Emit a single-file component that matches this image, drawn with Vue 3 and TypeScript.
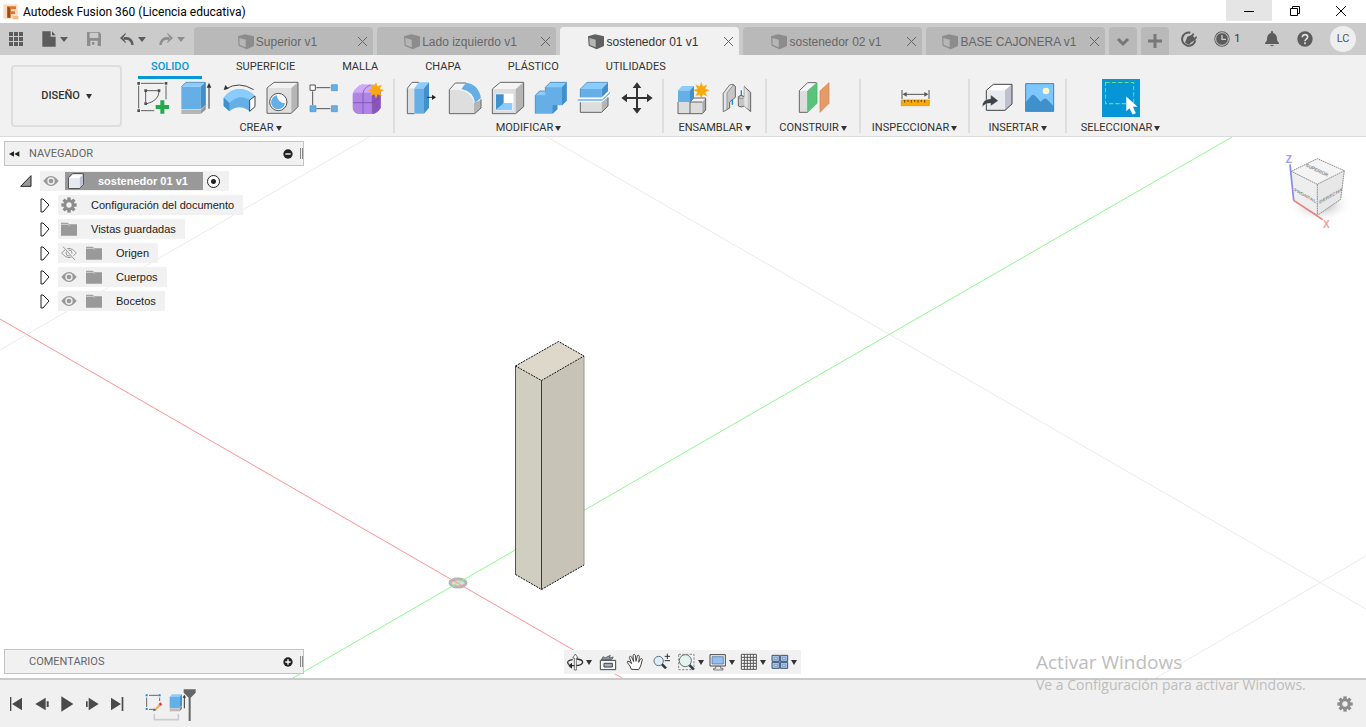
<script setup lang="ts">
import { ref } from 'vue'

interface Tool { name: string; icon: string }
interface Group { label: string; size: string; tools: Tool[] }
interface TreeNode { label: string; icon: 'gear' | 'folder'; eye?: 'on' | 'off' }
interface ViewTool { name: string; icon: string; menu: boolean }

const documents = ['Superior v1', 'Lado izquierdo v1', 'sostenedor 01 v1', 'sostenedor 02 v1', 'BASE CAJONERA v1']
const activeDocument = ref(2)

const workspaces = ['SOLIDO', 'SUPERFICIE', 'MALLA', 'CHAPA', 'PLÁSTICO', 'UTILIDADES']
const activeWorkspace = ref(0)

const star = (x: number, y: number, r: number): string => {
  const points: string[] = []
  for (let i = 0; i < 16; i++) {
    const radius = i % 2 ? r * 0.5 : r
    const a = (Math.PI * i) / 8
    points.push(`${(x + radius * Math.sin(a)).toFixed(1)},${(y - radius * Math.cos(a)).toFixed(1)}`)
  }
  return `<polygon points="${points.join(' ')}" fill="#fba80a"/>`
}

const groups: Group[] = [
  {
    label: 'CREAR', size: 'g-create', tools: [
      { name: 'Crear boceto', icon: `<path d="M18 10H86M11 17V85M18 92H58M93 17V58M36 32H70M32 36V67M72 36Q70 62 36 71" fill="none" stroke="#606060" stroke-width="3"/><path d="M7 6h8v8H7zM89 6h8v8h-8zM7 88h8v8H7zM28 28h8v8h-8zM68 28h8v8h-8zM28 67h8v8h-8z" fill="#505050"/><path d="M76 61h12v14h14v12H88v14H76V87H62V75h14z" fill="#22aa4c"/>` },
      { name: 'Extrusión', icon: `<path d="M10 90H68V102H10z" fill="#b5b5b5"/><path d="M68 90l15-14v13l-15 13z" fill="#969696"/><path d="M10 20H68V88H10z" fill="#66aee6"/><path d="M10 20L24 7H82L68 20z" fill="#8accff"/><path d="M68 20L82 7V76L68 88z" fill="#4090cc"/><path d="M10 20L24 7H82V76" fill="none" stroke="#39719d" stroke-width="2"/><path d="M93 86V18" stroke="#333" stroke-width="3"/><path d="M93 8l7 15H86z" fill="#333"/>` },
      { name: 'Barrido', icon: `<path d="M14 27Q54 2 98 29" fill="none" stroke="#444" stroke-width="3"/><path d="M8 30l5-15 10 11z" fill="#333"/><path d="M8 53Q28 28 54 27Q82 27 101 47V80L86 94Q55 70 25 94L8 78z" fill="#66aee6"/><path d="M8 53Q28 28 54 27Q82 27 101 47L86 60Q55 40 25 69z" fill="#8accff"/><path d="M8 53L25 69V94L8 78z" fill="#4090cc"/><path d="M86 60L102 48V80L86 94z" fill="#fff" stroke="#444" stroke-width="3"/>` },
      { name: 'Agujero', icon: `<path d="M9 24H82V100H9z" fill="#dfdfdf"/><path d="M9 24L30 7H102L82 24z" fill="#f2f2f2"/><path d="M82 24L102 7V80L82 100z" fill="#b5b5b5"/><path d="M9 24L30 7H102V80L82 100H9z" fill="none" stroke="#666" stroke-width="3"/><circle cx="43" cy="66" r="26" fill="#f8f8f8" stroke="#555" stroke-width="3"/><path d="M38 46A21 21 0 1 0 63 70A26 26 0 0 1 38 46z" fill="#66aee6"/>` },
      { name: 'Patrón', icon: `<path d="M28 23H70M17 34V75M28 86H70" stroke="#555" stroke-width="3"/><path d="M9 15h16v16H9z" fill="#fff" stroke="#555" stroke-width="3"/><path d="M73 14h18v18H73zM9 77h18v18H9zM73 77h18v18H73z" fill="#66aee6" stroke="#4a91c8" stroke-width="2"/>` },
      { name: 'Crear forma', icon: `<path d="M8 42Q12 28 24 20Q31 12 43 14H75Q92 24 92 38V84Q82 99 69 102H23Q8 98 8 82z" fill="#b083e6"/><path d="M8 42Q12 28 24 20Q31 12 43 14H75L67 38H24Q12 36 8 42z" fill="#cda9fa"/><path d="M67 38Q90 20 92 38V84Q82 99 69 102z" fill="#8955bd"/><path d="M9 68H68L91 50M39 39V102M67 40V100M39 39Q42 22 62 15" fill="none" stroke="#704a99" stroke-width="2"/>${star(78, 31, 25)}` },
    ],
  },
  {
    label: 'MODIFICAR', size: 'g-modify', tools: [
      { name: 'Pulsar/tirar', icon: `<path d="M13 25H34V101H13z" fill="#ddd"/><path d="M13 25L27 7H50L34 25z" fill="#f5f5f5"/><path d="M34 101H13V25L27 7H48" fill="none" stroke="#666" stroke-width="3"/><path d="M34 25H63V101H34z" fill="#66aee6"/><path d="M34 25L48 7H78L63 25z" fill="#8accff"/><path d="M63 25L78 7V83L63 101z" fill="#4090cc"/><path d="M72 52H92" stroke="#333" stroke-width="3"/><path d="M87 44l12 8-12 8z" fill="#222"/>` },
      { name: 'Empalme', icon: `<path d="M10 29L28 9H62Q99 20 105 62V84L86 101H10z" fill="#f4f4f4"/><path d="M10 29H36Q78 35 84 72V101H10z" fill="#dedede"/><path d="M84 68L105 60V84L86 101H84z" fill="#b5b5b5"/><path d="M10 29L28 9H60M105 58V84L86 101H10V29" fill="none" stroke="#666" stroke-width="3"/><path d="M46 27L60 8Q97 12 105 54L87 68Q82 34 46 27z" fill="#66aee6"/>` },
      { name: 'Vaciado', icon: `<path d="M10 27H80V101H10z" fill="#ddd"/><path d="M10 27L34 7H104L80 27z" fill="#f4f4f4"/><path d="M80 27L104 7V80L80 101z" fill="#b5b5b5"/><path d="M10 27L34 7H104V80L80 101H10z" fill="none" stroke="#666" stroke-width="3"/><path d="M20 41H73V91H20z" fill="#fff"/><path d="M21 43L44 43V71L21 90z" fill="#4090cc"/><path d="M21 90L44 69H70V90z" fill="#8accff"/>` },
      { name: 'Combinar', icon: `<path d="M10 46L23 33H40V22L55 7H104V62L90 76H76V88L62 101H10z" fill="#66aee6"/><path d="M40 22L55 7H104L90 22zM10 46L23 33H40V46z" fill="#8accff"/><path d="M90 22L104 7V62L90 76zM62 76H76V88L62 101z" fill="#4090cc"/><path d="M10 101V46L23 33H40V22L55 7H104" fill="none" stroke="#3979a8" stroke-width="2"/>` },
      { name: 'Dividir', icon: `<path d="M16 67H80V97H16z" fill="#ddd"/><path d="M80 67L99 50V78L80 97z" fill="#b5b5b5"/><path d="M16 67V97H80L99 78V52" fill="none" stroke="#666" stroke-width="3"/><path d="M16 27H80V52H16z" fill="#66aee6"/><path d="M16 27L36 7H99L80 27z" fill="#8accff"/><path d="M80 27L99 7V34L80 52z" fill="#4090cc"/><path d="M16 52V27L36 7H99" fill="none" stroke="#3979a8" stroke-width="2"/><path d="M8 60H82L105 38" fill="none" stroke="#fff" stroke-width="9"/><path d="M8 60H82L105 38" fill="none" stroke="#148bdc" stroke-width="3"/>` },
      { name: 'Mover', icon: `<path d="M57 20V88M23 54H91" stroke="#333" stroke-width="6"/><path d="M57 7L70 24H44zM57 101L70 84H44zM10 54L27 41V67zM104 54L87 41V67z" fill="#333"/>` },
    ],
  },
  {
    label: 'ENSAMBLAR', size: 'g-assemble', tools: [
      { name: 'Nuevo componente', icon: `<path d="M9 66H82V101H9z" fill="#ddd"/><path d="M45 66L56 54H92L82 66z" fill="#f5f5f5"/><path d="M82 66L92 54V90L82 101z" fill="#aaa"/><path d="M9 66V101H82L92 90V54H56L45 66V101M45 66H82" fill="none" stroke="#666" stroke-width="3"/><path d="M9 31H45V66H9z" fill="#66aee6"/><path d="M9 31L21 18H57L45 31z" fill="#8accff"/><path d="M45 31L57 18V53L45 66z" fill="#4090cc"/>${star(79, 31, 25)}` },
      { name: 'Unión', icon: `<path d="M16 40L35 15Q46 9 52 19V52L35 66V84L16 95z" fill="#c6c6c6" stroke="#666" stroke-width="3"/><path d="M16 40L35 15Q41 12 46 15L27 39V88L16 95z" fill="#e4e4e4" stroke="#777" stroke-width="2"/><path d="M61 50Q68 42 79 50V20L98 37V95L79 78Q69 84 61 78z" fill="#c6c6c6" stroke="#666" stroke-width="3"/><path d="M79 20L89 35V86L79 78z" fill="#e4e4e4"/><path d="M63 54Q70 59 77 54" fill="none" stroke="#777" stroke-width="2"/><path d="M43 60V74M70 31V46" stroke="#148bdc" stroke-width="4"/>` },
    ],
  },
  {
    label: 'CONSTRUIR', size: 'g-construct', tools: [
      { name: 'Plano de desfase', icon: `<path d="M13 32H38V97H13z" fill="#ddd"/><path d="M13 32L38 8H64L38 32z" fill="#f6f6f6"/><path d="M38 97H13V32L38 8H64" fill="none" stroke="#666" stroke-width="3"/><path d="M38 33L66 8V70L38 97z" fill="#59c37c" stroke="#46a767" stroke-width="2"/><path d="M75 33L102 8V70L75 97z" fill="#e59a68" stroke="#ca7e4b" stroke-width="2"/>` },
    ],
  },
  {
    label: 'INSPECCIONAR', size: 'g-inspect', tools: [
      { name: 'Medir', icon: `<path d="M15 30V57M96 30V57M20 43H90" stroke="#555" stroke-width="3"/><path d="M17 43l12-7v14zM94 43l-12-7v14z" fill="#555"/><path d="M13 60H97V77H13z" fill="#fba80a" stroke="#d88b00" stroke-width="2"/><path d="M23 60v8M33 60v6M43 60v8M53 60v6M63 60v8M73 60v6M83 60v8" stroke="#654300" stroke-width="3"/>` },
    ],
  },
  {
    label: 'INSERTAR', size: 'g-insert', tools: [
      { name: 'Insertar derivada', icon: `<path d="M25 31H81V91H25z" fill="#e9eaf0"/><path d="M25 31L46 13H102L81 31z" fill="#fff"/><path d="M81 31L102 13V72L81 91z" fill="#bec1cd"/><path d="M25 31L46 13H102V72L81 91H25z" fill="none" stroke="#444" stroke-width="3"/><path d="M13 81Q12 57 38 56V44L61 62L38 78V70Q23 68 13 81z" fill="#3d4148" stroke="#fff" stroke-width="1"/>` },
      { name: 'Insertar imagen', icon: `<path d="M13 10H99V95H13z" fill="#7dc6ff"/><path d="M14 67L31 47Q38 41 44 49L59 65L67 58Q74 52 80 60L98 79V94H14z" fill="#4090cc"/><path d="M14 11H98V94H14z" fill="none" stroke="#4488bd" stroke-width="3"/><circle cx="75" cy="33" r="10" fill="#fff7c7"/>` },
    ],
  },
  {
    label: 'SELECCIONAR', size: 'g-select', tools: [
      { name: 'Seleccionar', icon: `<path d="M0 0H108V108H0z" fill="#0696d7"/><path d="M10 10H90V70H10z" fill="none" stroke="#66de83" stroke-width="3" stroke-dasharray="12 6"/><path d="M69 50V92L78 83L87 101L96 97L88 79H101z" fill="#fff"/>` },
    ],
  },
]

const tree: TreeNode[] = [
  { label: 'Configuración del documento', icon: 'gear' },
  { label: 'Vistas guardadas', icon: 'folder' },
  { label: 'Origen', icon: 'folder', eye: 'off' },
  { label: 'Cuerpos', icon: 'folder', eye: 'on' },
  { label: 'Bocetos', icon: 'folder', eye: 'on' },
]

const gearTeeth = [0, 45, 90, 135].map((a) => `<path d="M19 1h10v46H19z" transform="rotate(${a} 24 24)"/>`).join('')
const glyphs = {
  gear: `<g fill="#8c8c8c">${gearTeeth}<circle cx="24" cy="24" r="17"/></g><circle cx="24" cy="24" r="8" fill="#f1f1f1"/>`,
  folder: `<path d="M0 5H20L25 10H48V44H0z" fill="#999"/><path d="M0 10H21L26 14" fill="none" stroke="#f1f1f1" stroke-width="2"/>`,
  on: `<path d="M1 24Q24-6 47 24Q24 54 1 24z" fill="#999"/><circle cx="24" cy="24" r="11" fill="#f1f1f1"/><circle cx="24" cy="24" r="7" fill="#999"/>`,
  off: `<path d="M2 24Q24-4 46 24Q24 52 2 24z" fill="none" stroke="#999" stroke-width="3"/><circle cx="24" cy="24" r="9" fill="none" stroke="#999" stroke-width="3"/><path d="M8 5L42 43" stroke="#f1f1f1" stroke-width="7"/><path d="M6 5L42 45" stroke="#999" stroke-width="3"/>`,
}

const viewTools: ViewTool[] = [
  { name: 'Órbita', menu: true, icon: `<path d="M33 18Q50 20 50 28Q48 37 28 38H12M20 20Q4 22 5 29Q6 33 10 35" fill="none" stroke="#333" stroke-width="4"/><path d="M7 38l11-9v18z" fill="#222"/><path d="M25 51V15h-5l8-12 8 12h-5v36z" fill="#fff" stroke="#333" stroke-width="2"/>` },
  { name: 'Mirar a', menu: false, icon: `<path d="M4 22H50V50H4z" fill="#f5f6f8" stroke="#444" stroke-width="3"/><path d="M15 31H40V42H15z" fill="#a9acc0" stroke="#444" stroke-width="3"/><path d="M7 20L12 11L19 14L34 7L31 15L43 12L38 20z" fill="#8c96a0" stroke="#444" stroke-width="2"/>` },
  { name: 'Encuadre', menu: false, icon: `<path d="M16 49Q14 39 4 29Q3 23 9 25L17 32L10 13Q12 6 17 12L23 26L21 7Q24 1 28 7L30 25L34 8Q38 4 40 10L38 28L43 18Q48 14 49 20L44 39L38 50z" fill="#fff" stroke="#454545" stroke-width="3" stroke-linejoin="round"/>` },
  { name: 'Zoom', menu: false, icon: `<path d="M25 32L39 46" stroke="#303b45" stroke-width="8"/><circle cx="17" cy="24" r="14" fill="#dbeefa" stroke="#65717b" stroke-width="3"/><path d="M35 10H51M43 2V18M35 23H51" stroke="#333" stroke-width="3"/>` },
  { name: 'Ajustar', menu: true, icon: `<path d="M2 4H48V50H2z" fill="none" stroke="#555" stroke-width="2" stroke-dasharray="7 4"/><path d="M32 34L47 49" stroke="#303b45" stroke-width="8"/><circle cx="22" cy="23" r="18" fill="#e5f3ee" stroke="#66717a" stroke-width="3"/>` },
  { name: 'Configuración de visualización', menu: true, icon: `<path d="M3 5H49V39H3z" fill="#f7f7f7" stroke="#444" stroke-width="3"/><path d="M9 11H43V33H9z" fill="#93bff2" stroke="#45658c" stroke-width="2"/><path d="M20 40H35V46H42V51H14V46H20z" fill="#e9e9e9" stroke="#444" stroke-width="2"/>` },
  { name: 'Rejilla', menu: true, icon: `<path d="M3 4H49V50H3z" fill="#fff"/><path d="M4 4H49V49H4zM13 4V50M22 4V50M31 4V50M40 4V50M4 13H49M4 22H49M4 31H49M4 40H49" fill="none" stroke="#555" stroke-width="3"/>` },
  { name: 'Ventanas gráficas', menu: true, icon: `<path d="M3 7H25V25H3zM28 7H50V25H28zM3 28H25V46H3zM28 28H50V46H28z" fill="#a9c8ef" stroke="#3d5470" stroke-width="3"/><path d="M9 13H19V19H9zM34 13H44V19H34zM9 34H19V40H9zM34 34H44V40H34z" fill="#cfe1f8" stroke="#5f84b0" stroke-width="2"/>` },
]

const playback: Tool[] = [
  { name: 'Ir al inicio', icon: `<path d="M6 6h4v42H6zM42 8V46L12 27z"/>` },
  { name: 'Paso atrás', icon: `<path d="M38 8V46L7 27zM41 19h6v17h-6z"/>` },
  { name: 'Reproducir', icon: `<path d="M10 4L46 27L10 50z"/>` },
  { name: 'Paso adelante', icon: `<path d="M9 19h5v17H9zM17 8L47 27L17 46z"/>` },
  { name: 'Ir al final', icon: `<path d="M9 8L39 27L9 46zM41 6h5v42h-5z"/>` },
]
</script>

<template>
  <div class="app">
    <header class="titlebar">
      <svg class="logo" viewBox="0 0 48 48" aria-hidden="true"><path d="M1 1h43v43H1z" fill="#fbdcc2" /><path d="M13 7h26v9H24v6h12v8H24v11H13z" fill="#d77a31" /><path d="M13 7l8 6v28h-8z" fill="#9e491c" /><path d="M30 36h16v10H30z" fill="#f7ba82" /></svg>
      <h1>Autodesk Fusion 360 (Licencia educativa)</h1>
      <div class="window-buttons">
        <button class="minimize" aria-label="Minimizar"><svg viewBox="0 0 10 10"><path d="M0 5.5h10" /></svg></button>
        <button aria-label="Restaurar"><svg viewBox="0 0 10 10"><path d="M.5 2.500h7v7h-7zM2.500 2.500v-2h7v7h-2" /></svg></button>
        <button aria-label="Cerrar"><svg viewBox="0 0 10 10"><path d="M0 0l10 10M10 0L0 10" /></svg></button>
      </div>
    </header>

    <div class="tabbar">
      <div class="quick">
        <button aria-label="Panel de datos"><svg class="i16" viewBox="0 0 48 48"><path d="M3 3h12v12H3zM18 3h12v12H18zM33 3h12v12H33zM3 18h12v12H3zM18 18h12v12H18zM33 18h12v12H33zM3 33h12v12H3zM18 33h12v12H18zM33 33h12v12H33z" /></svg></button>
        <button aria-label="Archivo" class="with-caret"><svg class="i16" viewBox="0 0 48 48"><path d="M4 1h25v16h15v30H4zM33 1l11 12H33z" /></svg><i class="caret"></i></button>
        <button aria-label="Guardar" class="dim"><svg class="i16" viewBox="0 0 48 48"><path d="M3 3h37l5 6v36H3zM11 5v16h26V5zM13 29v16h22V29zM18 33h7v8h-7z" fill-rule="evenodd" /></svg></button>
        <button aria-label="Deshacer" class="with-caret"><svg class="i16" viewBox="0 0 48 48"><path d="M3 21L20 5v5L11 21l9 11v5zM14 18h8q20 1 22 24h-7q-2-16-17-16h-6z" /></svg><i class="caret"></i></button>
        <button aria-label="Rehacer" class="with-caret dim"><svg class="i16" viewBox="0 0 48 48"><path d="M45 21L28 5v5l9 11-9 11v5zM34 18h-8Q6 19 4 42h7q2-16 17-16h6z" /></svg><i class="caret"></i></button>
      </div>
      <nav class="documents" aria-label="Documentos">
        <div v-for="(doc, i) in documents" :key="doc" class="doc" :class="{ active: i === activeDocument }">
          <button class="doc-name" @click="activeDocument = i">
            <svg class="i16" viewBox="0 0 48 48"><path d="M0 7L21 1L48 7V36L26 46L2 35z" fill="#606060" /><path d="M4 12L23 17V40L5 33z" fill="#b5b5b5" /></svg>{{ doc }}
          </button>
          <button class="doc-close" :aria-label="'Cerrar ' + doc"><svg viewBox="0 0 9 9"><path d="M0 0l9 9M9 0L0 9" /></svg></button>
        </div>
      </nav>
      <div class="extra">
        <button aria-label="Lista de documentos"><svg viewBox="0 0 14 14"><path d="M2 5l5 5 5-5" /></svg></button>
        <button aria-label="Nuevo diseño"><svg viewBox="0 0 14 14"><path d="M7 0v14M0 7h14" /></svg></button>
      </div>
      <div class="status">
        <button aria-label="Extensiones"><svg class="i16" viewBox="0 0 48 48"><path d="M28 5A20 20 0 1 0 43 28" fill="none" stroke="#5c5c5c" stroke-width="6" /><path d="M12 35L19 17L31 12L36 6L40 9L36 16L41 20L46 15L48 20L42 28L31 34L24 41z" /></svg></button>
        <button aria-label="Estado de los trabajos" class="jobs"><svg class="i16" viewBox="0 0 48 48"><circle cx="24" cy="24" r="23" /><circle cx="24" cy="24" r="19" fill="none" stroke="#ccc" stroke-width="3" /><path d="M24 12v13h12" fill="none" stroke="#ccc" stroke-width="4" /></svg>1</button>
        <button aria-label="Notificaciones"><svg class="i16" viewBox="0 0 48 48"><path d="M21 1h6v5q12 3 12 18 0 8 6 12v3H3v-3q6-4 6-12Q9 9 21 6zM18 42h12q-6 8-12 0z" /></svg></button>
        <button aria-label="Ayuda"><svg class="i16" viewBox="0 0 48 48"><circle cx="24" cy="24" r="23" /><path d="M16 19q0-8 8-8t8 7q0 4-5 7-3 2-3 6M24 34v6" fill="none" stroke="#ddd" stroke-width="5" /></svg></button>
        <button class="avatar" aria-label="Cuenta LC">LC</button>
      </div>
    </div>

    <section class="ribbon">
      <div class="workspace"><button>DISEÑO<i class="caret"></i></button></div>
      <div class="ribbon-main">
        <nav class="ribbon-tabs" aria-label="Cinta">
          <button v-for="(w, i) in workspaces" :key="w" :class="{ active: i === activeWorkspace }" @click="activeWorkspace = i">{{ w }}</button>
        </nav>
        <div class="groups">
          <div v-for="g in groups" :key="g.label" class="group" :class="g.size">
            <div class="tools">
              <button v-for="t in g.tools" :key="t.name" :aria-label="t.name"><svg viewBox="0 0 108 108" v-html="t.icon"></svg></button>
            </div>
            <button class="group-label">{{ g.label }}<i class="caret"></i></button>
          </div>
        </div>
      </div>
    </section>

    <main class="canvas">
      <svg class="scene" viewBox="0 137 1366 541" preserveAspectRatio="xMinYMin slice" aria-hidden="true">
        <g fill="none" stroke="#ebebeb"><path d="M369 137L0 350M547 137L1366 609M1156 678L1366 556" /></g>
        <ellipse cx="458" cy="583" rx="8" ry="4" fill="#ddd" stroke="#b5b5b5" stroke-width="3" />
        <path d="M0 319L622 678" stroke="#ff9292" />
        <path d="M1232 137L293 678" stroke="#8cfa8c" />
        <path d="M515.500 366L541.500 380.500V589.500L515.500 574.500z" fill="#d0cec1" />
        <path d="M541.500 380.500L584 356V565L541.500 589.500z" fill="#c7c3b6" />
        <path d="M515.500 366L558.500 341.500L584 356L541.500 380.500z" fill="#ddd8ca" />
        <path d="M584 356V565" stroke="#9a978d" />
        <path d="M515.500 366V574.500" stroke="#55534c" />
        <path d="M541.500 380.500V589.500" stroke="#3d3b36" />
        <path d="M515.500 366L558.500 341.500L584 356L541.500 380.500zM515.500 574.500L541.500 589.500L584 565" fill="none" stroke="#111" stroke-dasharray="2 1" />
      </svg>

      <div class="panel">
        <button class="panel-icon" aria-label="Contraer navegador"><svg class="i12" viewBox="0 0 36 36"><path d="M18 10v16L3 18zM34 10v16L19 18z" fill="#222" /></svg></button>
        <h2>NAVEGADOR</h2>
        <button class="panel-icon" aria-label="Ocultar"><svg class="i12" viewBox="0 0 36 36"><circle cx="18" cy="18" r="14" fill="#222" /><path d="M10 18h16" stroke="#fff" stroke-width="4" /></svg></button>
        <span class="grip"></span>
      </div>

      <ul class="tree">
        <li class="root">
          <button class="twist" aria-label="Contraer"><svg class="i12" viewBox="0 0 36 36"><path d="M33 2V34H2z" fill="#999" stroke="#222" stroke-width="3" /></svg></button>
          <div class="node">
            <svg class="i16" viewBox="0 0 48 48" v-html="glyphs.on"></svg>
            <span class="root-name"><svg class="i16" viewBox="0 0 48 48"><path d="M2 14L14 2H46V35L35 46H2z" fill="#fff" stroke="#444" stroke-width="3" /><path d="M3 15H34V45H3z" fill="#e8eaf1" /><path d="M35 14L45 4V35L35 45z" fill="#bfc2cf" /></svg><b>sostenedor 01 v1</b></span>
            <input class="activate" type="radio" name="component" checked aria-label="Activar componente" />
          </div>
        </li>
        <li v-for="n in tree" :key="n.label">
          <button class="twist" :aria-label="'Expandir ' + n.label"><svg class="i12" viewBox="0 0 36 36"><path d="M3 0H9L27 18L9 39H3z" fill="#fff" stroke="#222" stroke-width="3" /></svg></button>
          <div class="node">
            <svg v-if="n.eye" class="i16 eye" viewBox="0 0 48 48" v-html="glyphs[n.eye]"></svg>
            <svg class="i16" viewBox="0 0 48 48" v-html="glyphs[n.icon]"></svg>
            <span class="name">{{ n.label }}</span>
          </div>
        </li>
      </ul>

      <svg class="viewcube" viewBox="0 0 318 300" aria-label="ViewCube">
        <defs><radialGradient id="shade"><stop offset="0" stop-color="#999" /><stop offset="1" stop-color="#fff" stop-opacity="0" /></radialGradient></defs>
        <ellipse cx="180" cy="192" rx="96" ry="56" fill="url(#shade)" />
        <path d="M94 94L172 56L253 92L172 133z" fill="#f4f4f4" /><path d="M94 94L172 133V226L101 181z" fill="#eee" /><path d="M172 133L253 92L242 178L172 226z" fill="#e7e7e7" />
        <path d="M94 94L172 56L253 92L172 133zM172 133V226L242 178L253 92M101 181L172 226" fill="none" stroke="#8c8c8c" stroke-width="3" stroke-dasharray="5 2" />
        <path d="M90 73L101 181" stroke="#8888f2" stroke-width="5" /><path d="M101 181L188 239" stroke="#f08080" stroke-width="5" />
        <g class="face"><text transform="translate(103 153) skewY(30)">FRONTAL</text><text transform="translate(178 192) skewY(-30)">DERECHA</text><text transform="translate(136 79) rotate(25)">SUPERIOR</text></g>
        <text class="axis z" x="77" y="68">Z</text><text class="axis x" x="189" y="263">X</text>
      </svg>

      <div class="bottom">
        <div class="panel">
          <span class="panel-icon"></span>
          <h2>COMENTARIOS</h2>
          <button class="panel-icon" aria-label="Añadir comentario"><svg class="i12" viewBox="0 0 36 36"><circle cx="18" cy="18" r="14" fill="#222" /><path d="M10 18h16M18 10v16" stroke="#fff" stroke-width="4" /></svg></button>
          <span class="grip"></span>
        </div>
        <div class="viewbar">
          <button v-for="v in viewTools" :key="v.name" :class="{ menu: v.menu }" :aria-label="v.name"><svg viewBox="0 0 54 54" v-html="v.icon"></svg><i v-if="v.menu" class="caret"></i></button>
        </div>
      </div>
    </main>

    <footer class="timeline">
      <div class="playback">
        <button v-for="p in playback" :key="p.name" :aria-label="p.name"><svg viewBox="0 0 54 54" v-html="p.icon"></svg></button>
      </div>
      <svg class="features" viewBox="0 0 156 99" aria-label="Operaciones">
        <path d="M12 22h29M5 29v28M12 64h15M44 29v10" stroke="#666" stroke-width="3" /><path d="M2 19h6v6H2zM41 19h6v6h-6zM2 60h6v6H2z" fill="#148bdc" />
        <path d="M27 66L44 46L49 52L33 67z" fill="#f5ac43" /><path d="M41 48l5-5 6 6-5 5z" fill="#e33d42" /><path d="M24 70l3-9 7 6z" fill="#666" />
        <path d="M74 61h30v9H74z" fill="#bbb" /><path d="M104 61l7-7v8l-7 8z" fill="#888" /><path d="M74 27h30v33H74z" fill="#66aee6" /><path d="M74 27l7-8h30l-7 8z" fill="#8accff" /><path d="M104 27l7-8v33l-7 8z" fill="#4090cc" />
        <path d="M118 61V26" stroke="#333" stroke-width="3" /><path d="M118 20l5 9h-10z" fill="#333" />
        <path d="M28 78v17h72V78" fill="none" stroke="#ccc" stroke-width="5" />
        <path d="M116 4h36v10l-15 15v70h-6V29l-15-15z" fill="#666" />
      </svg>
      <button class="settings" aria-label="Ajustes"><svg class="i16" viewBox="0 0 48 48" v-html="glyphs.gear"></svg></button>
    </footer>

    <div class="watermark"><p class="big">Activar Windows</p><p>Ve a Configuración para activar Windows.</p></div>
  </div>
</template>

<style>
body { margin: 0; }
</style>

<style scoped>
.app { position: relative; display: flex; flex-direction: column; min-height: 100vh; overflow: hidden; background: #fff; color: #333; font: 11px/16px Roboto, "Liberation Sans", sans-serif; }
.app :where(button) { display: flex; align-items: center; justify-content: center; padding: 0; border: 0; background: none; color: inherit; font: inherit; }
svg { display: block; flex: none; }
h1, h2, p, ul { margin: 0; padding: 0; font-weight: 400; list-style: none; }
.i16 { width: 16px; height: 16px; }
.i12 { width: 12px; height: 12px; overflow: visible; }
.caret { flex: none; width: 0; height: 0; border: solid transparent; border-width: 5px 3px 0; border-top-color: currentColor; }

.titlebar { display: flex; align-items: center; height: 23px; }
.logo { width: 16px; height: 16px; margin: 0 4px 0 3px; }
h1 { flex: 1; color: #000; font: 12px/22px Roboto, sans-serif; }
.window-buttons { display: flex; align-self: flex-start; padding-right: 2px; }
.window-buttons button { width: 46px; height: 21px; }
.window-buttons .minimize { background: #e5e5e5; }
.window-buttons svg { width: 10px; height: 10px; fill: none; stroke: #000; overflow: visible; }

.tabbar { display: flex; height: 32px; background: #cbcbcb; color: #5c5c5c; }
.quick { display: flex; align-items: center; gap: 17px; width: 186px; padding-left: 8px; fill: #5c5c5c; }
.quick .with-caret { gap: 3px; margin-right: 1px; }
.quick .with-caret + .with-caret { margin-left: -6px; }
.quick .dim { opacity: .55; }
.quick .caret { border-width: 5px 4px 0; }
.documents { display: flex; flex: 1; gap: 4px; padding-top: 4px; font: 12px/16px "Liberation Sans", Arial, sans-serif; }
.doc { display: flex; flex: 1; padding: 1px 0 0 10px; border-radius: 4px 4px 0 0; background: #b9b9b9; color: #666; }
.doc.active { background: #f1f1f1; color: #333; }
.doc .doc-name { flex: 1; gap: 2px; white-space: nowrap; }
.doc .i16 { opacity: .5; }
.doc.active .i16 { opacity: 1; }
.doc .doc-close { width: 22px; }
.doc-close svg { width: 9px; height: 9px; fill: none; stroke: #666; stroke-width: 1; }
.extra { display: flex; gap: 4px; padding: 4px 0 0 4px; }
.extra button { width: 28px; border-radius: 4px 4px 0 0; background: #b9b9b9; }
.extra svg { width: 14px; height: 14px; fill: none; stroke: #777; stroke-width: 3; }
.status { display: flex; align-items: center; justify-content: space-between; width: 175px; padding: 0 10px 0 12px; fill: #5c5c5c; }
.status .jobs { gap: 4px; margin-right: 6px; color: #333; }
.status .avatar { width: 26px; height: 26px; border-radius: 50%; background: #eee; color: #555; }

.ribbon { display: flex; height: 81px; border-bottom: 1px solid #dcdcdc; background: #f1f1f1; }
.workspace { width: 128px; }
.workspace button { box-sizing: border-box; width: 111px; height: 62px; margin: 10px 0 0 11px; gap: 6px; border: 2px solid #dedede; border-radius: 4px; font-weight: 500; }
.ribbon-main { flex: 1; }
.ribbon-tabs { display: flex; gap: 21px; height: 24px; padding-left: 10px; }
.ribbon-tabs button { box-sizing: border-box; padding: 2px 13px 0; border-bottom: 3px solid transparent; }
.ribbon-tabs .active { border-color: #0696d7; color: #0696d7; font-weight: 500; }
.groups { display: flex; }
.group { box-sizing: border-box; height: 54px; border-right: 2px solid #dedede; }
.group:last-child { border-right: 0; }
.g-create { width: 267px; }
.g-modify { width: 269px; }
.g-assemble { width: 103px; }
.g-construct { width: 94px; }
.g-inspect { width: 109px; }
.g-insert { width: 97px; }
.g-select { width: 107px; }
.tools { display: flex; justify-content: center; height: 38px; }
.tools button { width: 43px; }
.tools svg { width: 36px; height: 36px; }
.g-select .tools svg { width: 38px; height: 38px; }
.group .group-label { width: 100%; gap: 2px; height: 22px; }

.canvas { position: relative; display: flex; flex: 1; flex-direction: column; min-height: 540px; padding: 4px 6px 4px 4px; box-sizing: border-box; }
.scene { position: absolute; inset: 0; width: 100%; height: 100%; }
.panel { position: relative; box-sizing: border-box; display: flex; align-items: center; width: 300px; height: 25px; border: 1px solid #c4c4c4; background: #f1f1f1; }
.panel-icon { width: 18px; }
.panel h2 { flex: 1; padding-left: 6px; color: #666; font-size: 11px; line-height: 16px; }
.grip { box-sizing: border-box; width: 3px; height: 11px; margin-left: 3px; border: solid #888; border-width: 0 1px; }

.tree { position: relative; padding: 3px 0 0 36px; font: 11px/20px "Liberation Sans", Arial, sans-serif; color: #222; }
.tree li { display: flex; align-items: center; height: 24px; }
.tree .root { margin-left: -20px; }
.twist { width: 12px; margin-right: 6px; }
.root .twist { margin-right: 8px; }
.node { display: flex; align-items: center; height: 20px; padding: 0 9px 0 3px; background: #f1f1f1; }
.eye { margin-right: 9px; }
.name { padding-left: 14px; }
.root-name { display: flex; align-items: center; height: 18px; margin: 0 4px 0 6px; padding: 0 15px 0 3px; background: #999; color: #fff; }
.root-name b { padding-left: 14px; }
.activate { appearance: none; box-sizing: border-box; width: 13px; height: 13px; margin: 0; border: 1px solid #222; border-radius: 50%; background: radial-gradient(circle, #222 0 2px, #fff 3px); }

.viewcube { position: absolute; top: 3px; right: 0; width: 106px; height: 100px; }
.face { fill: #888; font: bold 14px "Liberation Sans", sans-serif; }
.axis { font: bold 30px "Liberation Sans", sans-serif; }
.z { fill: #9c9cf5; }
.x { fill: #f59c9c; }

.bottom { position: relative; display: grid; grid-template-columns: 1fr auto 1fr; align-items: end; margin-top: auto; }
.viewbar { display: flex; align-items: center; gap: 5px; height: 24px; padding: 0 4px 0 2px; background: #f1f1f1; }
.viewbar button { width: 22px; }
.viewbar .menu { width: 26px; gap: 2px; }
.viewbar svg { width: 18px; height: 18px; }

.timeline { display: flex; height: 47px; border-top: 2px solid #c9c9c9; background: #f0f0f0; }
.playback { display: flex; align-items: center; gap: 7px; width: 137px; padding-left: 8px; fill: #4a4a4a; }
.playback svg { width: 18px; height: 18px; }
.features { width: 52px; height: 33px; margin-top: 8px; }
.timeline .settings { margin: 0 13px 0 auto; }

.watermark { position: absolute; right: 56px; bottom: 31px; width: 274px; color: #bdbdbd; font: 14px/22px "Open Sans", sans-serif; white-space: nowrap; pointer-events: none; }
.watermark .big { font-size: 19px; line-height: 24px; }
</style>
